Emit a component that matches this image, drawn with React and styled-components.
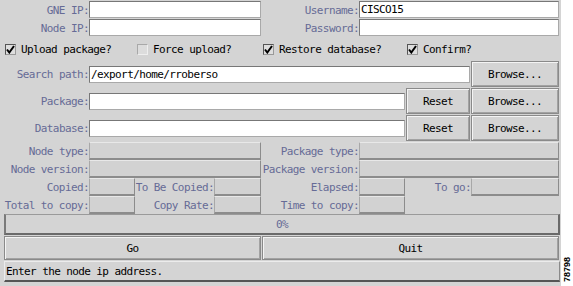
import styled, { createGlobalStyle } from "styled-components";

const GlobalStyle = createGlobalStyle`
  body {
    margin: 0;
    background: #fff;
    font-family: "DejaVu Sans Mono", "Liberation Mono", monospace;
    font-size: 11px;
    letter-spacing: -0.6px;
  }
`;

function CheckMark() {
  return (
    <svg width="9" height="9" viewBox="0 0 9 9">
      <path d="M1 4.5 L3.3 7.5 L8 1" stroke="#000" strokeWidth="2" fill="none" />
    </svg>
  );
}

function Check({ col, checked, children }) {
  return (
    <CheckItem $col={col}>
      <Box $checked={checked}>{checked && <CheckMark />}</Box>
      {children}
    </CheckItem>
  );
}

export default function App() {
  return (
    <>
      <GlobalStyle />
      <Page>
        <Panel>
          <Label>GNE IP:</Label>
          <Entry $col="2 / 5" defaultValue="" />
          <Label $col="5">Username:</Label>
          <Entry $col="6 / 9" defaultValue="CISCO15" />

          <Label>Node IP:</Label>
          <Entry $col="2 / 5" defaultValue="" />
          <Label $col="5">Password:</Label>
          <Entry $col="6 / 9" defaultValue="" />

          <Check col="1 / 3" checked>Upload package?</Check>
          <Check col="3 / 5">Force upload?</Check>
          <Check col="5 / 7" checked>Restore database?</Check>
          <Check col="7 / 9" checked>Confirm?</Check>

          <Label>Search path:</Label>
          <Entry $col="2 / 8" $mid defaultValue="/export/home/rroberso" />
          <Button $col="8">Browse...</Button>

          <Label>Package:</Label>
          <Entry $col="2 / 7" $mid defaultValue="" />
          <Button $col="7">Reset</Button>
          <Button $col="8">Browse...</Button>

          <Label>Database:</Label>
          <Entry $col="2 / 7" $mid defaultValue="" />
          <Button $col="7">Reset</Button>
          <Button $col="8">Browse...</Button>

          <Label>Node type:</Label>
          <Field $col="2 / 5" />
          <Label $col="5">Package type:</Label>
          <Field $col="6 / 9" />

          <Label>Node version:</Label>
          <Field $col="2 / 5" />
          <Label $col="5">Package version:</Label>
          <Field $col="6 / 9" />

          <Label>Copied:</Label>
          <Field $col="2" />
          <Label $col="3">To Be Copied:</Label>
          <Field $col="4" />
          <Label $col="5">Elapsed:</Label>
          <Field $col="6" />
          <Label $col="7">To go:</Label>
          <Field $col="8" />

          <Label>Total to copy:</Label>
          <Field $col="2" />
          <Label $col="3">Copy Rate:</Label>
          <Field $col="4" />
          <Label $col="5">Time to copy:</Label>
          <Field $col="6" />

          <Progress>0%</Progress>

          <Button $col="1 / 5" $wide>Go</Button>
          <Button $col="5 / 9" $wide>Quit</Button>

          <Status>Enter the node ip address.</Status>
        </Panel>
        <Side>
          <FigureId>78798</FigureId>
        </Side>
      </Page>
    </>
  );
}

const Page = styled.div`
  display: flex;
  width: 573px;
  height: 286px;
`;

const Panel = styled.div`
  box-sizing: border-box;
  width: 561px;
  height: 286px;
  padding: 1px 1px 0 4px;
  background: #d4d4d4;
  display: grid;
  grid-template-columns: 85px 47px 78px 48px 97px 47px 65px 89px;
  grid-template-rows: 18px 18px 24px 27px 27px 27px 18px 18px 18px 18px 21px 26px 21px;
`;

const Label = styled.div`
  grid-column: ${(p) => p.$col || "1"};
  display: flex;
  align-items: center;
  justify-content: flex-end;
  white-space: nowrap;
  color: #666b96;
`;

const Entry = styled.input`
  grid-column: ${(p) => p.$col};
  align-self: ${(p) => (p.$mid ? "center" : "start")};
  box-sizing: border-box;
  width: calc(100% - 1px);
  height: 17px;
  margin: 0;
  padding: 0 1px;
  background: #fff;
  border: 1px solid;
  border-color: #777 #a9a9a9 #a9a9a9 #777;
  font: inherit;
  letter-spacing: inherit;
  color: #000;
  outline: none;
`;

const Button = styled.div`
  grid-column: ${(p) => p.$col};
  box-sizing: border-box;
  margin: ${(p) => (p.$wide ? "1px 1px 1px 0" : "0 1px 1px 0")};
  display: flex;
  align-items: center;
  justify-content: center;
  border: 1px solid #8a8a8a;
  box-shadow: inset 1px 1px 0 #f4f4f4, inset -1px -1px 0 #a2a2a2;
  background: #d4d4d4;
  color: #000;
`;

const Field = styled.div`
  grid-column: ${(p) => p.$col};
  box-sizing: border-box;
  margin-right: 1px;
  border-style: solid;
  border-width: 1px 1px 2px 1px;
  border-color: #e8e8e8 #8c8c8c #8c8c8c #a8a8a8;
  background: #d2d2d2;
`;

const CheckItem = styled.div`
  grid-column: ${(p) => p.$col};
  display: flex;
  align-items: center;
  gap: 5px;
  padding-left: 1px;
  white-space: nowrap;
  color: #000;
`;

const Box = styled.span`
  box-sizing: border-box;
  width: 11px;
  height: 11px;
  display: flex;
  align-items: center;
  justify-content: center;
  border: 1px solid;
  border-color: ${(p) => (p.$checked ? "#555 #999 #999 #555" : "#a8a8a8 #eee #eee #a8a8a8")};
  background: ${(p) => (p.$checked ? "#dedede" : "#dcdcdc")};
`;

const Progress = styled.div`
  grid-column: 1 / 9;
  box-sizing: border-box;
  display: flex;
  align-items: center;
  justify-content: center;
  border-style: solid;
  border-width: 1px 2px 2px 2px;
  border-color: #9a9a9a #6a6a6a #6a6a6a #7a7a7a;
  color: #666b96;
`;

const Status = styled.div`
  grid-column: 1 / 9;
  box-sizing: border-box;
  display: flex;
  align-items: center;
  padding-left: 1px;
  border-style: solid;
  border-width: 1px 1px 2px 1px;
  border-color: #ececec #8a8a8a #555 #ececec;
  color: #000;
`;

const Side = styled.div`
  flex: 1;
  display: flex;
  align-items: flex-end;
  justify-content: center;
  padding-bottom: 4px;
  background: #fff;
`;

const FigureId = styled.div`
  writing-mode: vertical-rl;
  transform: rotate(180deg);
  font-family: "Liberation Sans", Arial, sans-serif;
  font-size: 9px;
  font-weight: bold;
  letter-spacing: 0;
  color: #000;
`;
